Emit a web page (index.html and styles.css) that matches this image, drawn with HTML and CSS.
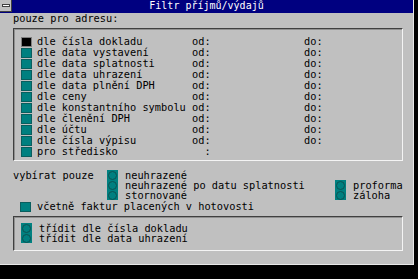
FILE: index.html
```html
<!DOCTYPE html>
<html lang="cs">

<head>
  <meta charset="UTF-8">
  <meta name="viewport" content="width=device-width, initial-scale=1.0">
  <title>Filtr příjmů/výdajů</title>
  <link rel="stylesheet" href="styles.css">
</head>

<body>
  <div class="window">
    <div class="titlebar">
      <span class="sysbox"><span class="sysbox-dash"></span></span>
      <span class="title">Filtr příjmů/výdajů</span>
    </div>

    <div class="content">
      <div class="caption">pouze pro adresu:</div>

      <!-- filtry podle pole -->
      <div class="group group-filters">
        <div class="filter-row"><span class="check check-focus"></span><span>dle čísla dokladu</span><span>od:</span><span>do:</span></div>
        <div class="filter-row"><span class="check"></span><span>dle data vystavení</span><span>od:</span><span>do:</span></div>
        <div class="filter-row"><span class="check"></span><span>dle data splatnosti</span><span>od:</span><span>do:</span></div>
        <div class="filter-row"><span class="check"></span><span>dle data uhrazení</span><span>od:</span><span>do:</span></div>
        <div class="filter-row"><span class="check"></span><span>dle data plnění DPH</span><span>od:</span><span>do:</span></div>
        <div class="filter-row"><span class="check"></span><span>dle ceny</span><span>od:</span><span>do:</span></div>
        <div class="filter-row"><span class="check"></span><span>dle konstantního symbolu</span><span>od:</span><span>do:</span></div>
        <div class="filter-row"><span class="check"></span><span>dle členění DPH</span><span>od:</span><span>do:</span></div>
        <div class="filter-row"><span class="check"></span><span>dle účtu</span><span>od:</span><span>do:</span></div>
        <div class="filter-row"><span class="check"></span><span>dle čísla výpisu</span><span>od:</span><span>do:</span></div>
        <div class="filter-row"><span class="check"></span><span>pro středisko</span><span class="pre">  :</span><span></span></div>
      </div>

      <div class="select">
        <span class="select-label">vybírat pouze</span>
        <div class="radio-list radio-list-state">
          <div class="radio-row"><span class="radio"></span>neuhrazené</div>
          <div class="radio-row"><span class="radio"></span>neuhrazené po datu splatnosti</div>
          <div class="radio-row"><span class="radio"></span>stornované</div>
        </div>
        <div class="radio-list radio-list-type">
          <div class="radio-row"><span class="radio"></span>proforma</div>
          <div class="radio-row"><span class="radio"></span>záloha</div>
        </div>
      </div>

      <div class="cash-row"><span class="check"></span>včetně faktur placených v hotovosti</div>

      <!-- trideni -->
      <div class="group group-sort">
        <div class="radio-row"><span class="radio"></span>třídit dle čísla dokladu</div>
        <div class="radio-row"><span class="radio"></span>třídit dle data uhrazení</div>
      </div>
    </div>
  </div>
</body>

</html>
```

FILE: styles.css
```css
html {
  box-sizing: border-box;
  font-family: "DejaVu Sans Mono", "Liberation Mono", monospace;
  font-size: 10.3px;
}

*,
*:before,
*:after {
  box-sizing: inherit;
}

body {
  margin: 0;
  background-color: #000;
  color: #000;
}

.window {
  width: 414px;
  height: 265px;
  background-color: #c0c0c0;
  border-right: 1px solid #e8e8e8;
  border-bottom: 1px solid #e8e8e8;
}

/* titulek okna */
.titlebar {
  display: flex;
  height: 13px;
  background-color: #000080;
  color: #fff;
}

.sysbox {
  display: flex;
  align-items: center;
  justify-content: center;
  width: 12px;
  height: 12px;
  background-color: #c0c0c0;
  border-right: 1px solid #404040;
  border-bottom: 1px solid #404040;
}

.sysbox-dash {
  width: 8px;
  height: 3px;
  background-color: #fff;
  border: 1px solid #404040;
}

.title {
  flex: 1;
  padding-right: 12px;
  font-size: 10px;
  line-height: 12px;
  text-align: center;
}

.content {
  padding: 0 10px 0 13px;
}

.caption {
  line-height: 11px;
}

.group {
  margin-top: 4px;
  border-top: 1px solid #404040;
  border-left: 1px solid #404040;
  border-right: 1px solid #f4f4f4;
  border-bottom: 1px solid #f4f4f4;
  box-shadow: inset 1px 1px 0 #909090;
}

.group-filters {
  padding: 7px 0 3px 7px;
}

.filter-row {
  display: grid;
  grid-template-columns: 11px 150px 107px 1fr;
  column-gap: 5px;
  align-items: center;
  height: 11px;
  line-height: 11px;
}

.pre {
  white-space: pre;
}

.check {
  display: inline-block;
  width: 11px;
  height: 10px;
  background-color: #008080;
  border: 1px solid #0a5e5e;
}

.check-focus {
  background-color: #000;
  border-color: #808080;
}

.select {
  display: flex;
  margin-top: 9px;
  line-height: 10px;
}

.select-label {
  width: 94px;
}

.radio-list-state {
  width: 228px;
}

.radio-list-type {
  padding-top: 10px;
}

.radio-row {
  display: flex;
  align-items: center;
  height: 10px;
  line-height: 10px;
}

.radio {
  display: flex;
  align-items: center;
  justify-content: center;
  flex: none;
  width: 11px;
  height: 10px;
  margin-right: 7px;
  background-color: #008080;
}

.radio:after {
  content: "";
  width: 9px;
  height: 9px;
  border: 1px solid #0d5252;
  border-radius: 50%;
}

.cash-row {
  display: flex;
  align-items: center;
  gap: 6px;
  height: 11px;
  margin-top: 1px;
  padding-left: 7px;
  line-height: 11px;
}

.group-sort {
  padding: 6px 0 7px 7px;
}
```
